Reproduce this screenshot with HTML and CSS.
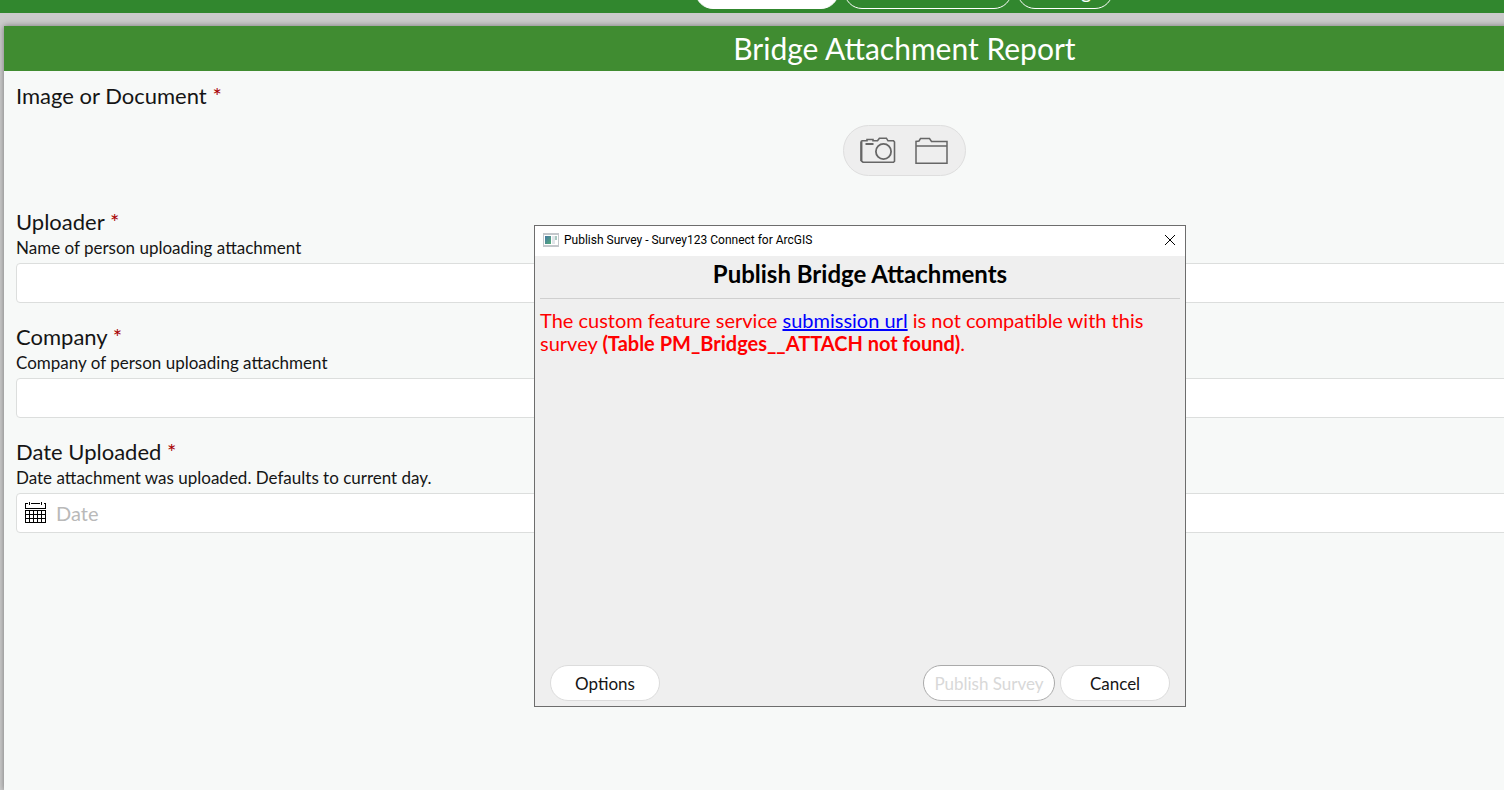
FILE: index.html
```html
<!DOCTYPE html>
<html lang="en">
<head>
<meta charset="utf-8">
<title>Survey123 Connect for ArcGIS</title>
<link rel="stylesheet" href="styles.css">
</head>
<body>
<div class="workspace">
  <nav class="toolbar">
    <button class="tab tab-form tab-active" type="button" aria-label="Form"></button>
    <button class="tab tab-schema" type="button" aria-label="Schema"></button>
    <button class="tab tab-settings" type="button">Settings</button>
  </nav>
  <main class="survey">
    <h1 class="survey-title">Bridge Attachment Report</h1>
    <form class="survey-form">
      <section class="question question-image">
        <h2 class="label">Image or Document <span class="required">*</span></h2>
        <div class="capture">
          <button class="icon-button" type="button" aria-label="Take photo">
            <svg width="36" height="28" viewBox="0 0 36 28" fill="none" stroke="#666">
              <path d="M1.500 3.500v20.500l1.500 1.200h30.500l1-1V5l-1-1.200h-5.500l-1.600-2.600h-7l-1.900 2.600h-4.500V2.500h-6v1.300H1.500" stroke-width="1.600"/>
              <path d="M1.200 4.500v19.500" stroke-width="2"/>
              <path d="M5.500 7h8" stroke-width="2"/>
              <circle cx="23.500" cy="14.500" r="7.600" stroke-width="1.800"/>
            </svg>
          </button>
          <button class="icon-button" type="button" aria-label="Choose file">
            <svg width="34" height="28" viewBox="0 0 34 28" fill="none" stroke="#666" stroke-width="1.500">
              <path d="M1 26.200V4.500L4 4l1.500-2.500h9L16.500 4.500H32v21.700z M1 9h31"/>
            </svg>
          </button>
        </div>
      </section>
      <section class="question">
        <label class="label" for="uploader">Uploader <span class="required">*</span></label>
        <p class="hint">Name of person uploading attachment</p>
        <input class="field" id="uploader" type="text">
      </section>
      <section class="question">
        <label class="label" for="company">Company <span class="required">*</span></label>
        <p class="hint">Company of person uploading attachment</p>
        <input class="field" id="company" type="text">
      </section>
      <section class="question">
        <label class="label" for="date">Date Uploaded <span class="required">*</span></label>
        <p class="hint">Date attachment was uploaded. Defaults to current day.</p>
        <div class="field date-field">
          <svg width="22" height="22" viewBox="0 0 22 22" fill="none" stroke="#000" shape-rendering="crispEdges">
            <path d="M3 1.500H.5v5h20v-5H19M6 1.500h9M4.500 0v3M16.500 0v3M.5 8.500h20v12H.5zM.5 12.500h20M.5 16.500h20M4.500 8.500v12M8.500 8.500v12M12.500 8.500v12M16.500 8.500v12"/>
          </svg>
          <input class="date-input" id="date" type="text" placeholder="Date">
        </div>
      </section>
    </form>
  </main>
</div>
<div class="dialog" role="dialog" aria-labelledby="dialog-heading">
  <header class="dialog-bar">
    <svg width="16" height="14" viewBox="0 0 16 14">
      <defs>
        <linearGradient id="app-pane" x1="0" y1="0" x2="1" y2="1">
          <stop offset="0" stop-color="#4577a3"/>
          <stop offset="1" stop-color="#54ad79"/>
        </linearGradient>
      </defs>
      <path fill="#c3c7cb" d="M0 0h16v14H0z"/>
      <path fill="#fff" d="M1 2h14v10H1z"/>
      <path fill="url(#app-pane)" d="M2 3h6v8H2z"/>
      <path fill="#e1e5e9" d="M9 3h3v8H9z"/>
      <path fill="#a8c9c1" d="M12 3h2v4h-2z"/>
    </svg>
    <span class="dialog-caption">Publish Survey - Survey123 Connect for ArcGIS</span>
    <button class="dialog-close" type="button" aria-label="Close">
      <svg width="12" height="12" viewBox="0 0 12 12" stroke="#000" stroke-width="1"><path d="M1 1l10 10M11 1L1 11"/></svg>
    </button>
  </header>
  <h2 class="dialog-heading" id="dialog-heading">Publish Bridge Attachments</h2>
  <p class="dialog-message">The custom feature service <a href="#">submission url</a> is not compatible with this survey <b>(Table PM_Bridges__ATTACH not found)</b>.</p>
  <footer class="dialog-actions">
    <button class="pill" type="button">Options</button>
    <button class="pill pill-publish" type="button" disabled>Publish Survey</button>
    <button class="pill" type="button">Cancel</button>
  </footer>
</div>
</body>
</html>
```
FILE: styles.css
```css
* {
  box-sizing: border-box;
}

body {
  margin: 0;
  min-height: 100vh;
  overflow: hidden;
  background: #cbcbcb;
  color: #151515;
  font-family: Lato, "Open Sans", sans-serif;
}

button,
input {
  font: inherit;
}

h1,
h2,
p {
  margin: 0;
  font-weight: 400;
}

.workspace {
  display: flex;
  flex-direction: column;
  width: 120%;
  min-height: 100vh;
}

.toolbar {
  display: flex;
  justify-content: center;
  align-items: flex-end;
  gap: 5px;
  height: 13px;
  padding: 0 0 4px 3px;
  overflow: hidden;
  background: #31872e;
}

.tab {
  flex: none;
  height: 36px;
  padding: 0;
  border: 1px solid #fff;
  border-radius: 18px;
  background: transparent;
  color: #fff;
  font-size: 20px;
  line-height: 24px;
}

.tab-active {
  background: #fff;
}

.tab-form {
  width: 144px;
}

.tab-schema {
  width: 168px;
}

.tab-settings {
  width: 96px;
}

.survey {
  flex: 1;
  margin: 13px 0 0 4px;
  background: #f7f9f8;
  box-shadow: 0 0 6px #777;
}

.survey-title {
  height: 45px;
  background: #408c31;
  color: #fff;
  font-size: 30px;
  line-height: 45px;
  text-align: center;
}

.survey-form {
  display: flex;
  flex-direction: column;
  gap: 20px;
  padding: 11px 12px;
}

.question {
  display: flex;
  flex-direction: column;
}

.question-image {
  gap: 15px;
  padding-bottom: 12px;
}

.label {
  font-size: 22px;
  line-height: 28px;
}

.required {
  color: #a80000;
}

.hint {
  font-size: 17px;
  line-height: 24px;
}

.field {
  width: 100%;
  height: 40px;
  margin-top: 3px;
  padding: 0 8px;
  border: 1px solid #dcdedd;
  border-radius: 4px;
  background: #fff;
}

.capture {
  display: flex;
  align-items: center;
  align-self: center;
  gap: 19px;
  height: 51px;
  padding: 0 16px;
  border: 1px solid #dedede;
  border-radius: 26px;
  background: #eee;
}

.icon-button {
  display: flex;
  padding: 0;
  border: 0;
  background: transparent;
}

.date-field {
  display: flex;
  align-items: center;
  gap: 9px;
}

.date-input {
  flex: 1;
  padding: 0;
  border: 0;
  background: transparent;
  font-size: 20px;
}

.date-input::placeholder {
  color: #b9b9b9;
}

.dialog {
  position: absolute;
  top: 225px;
  left: 534px;
  display: flex;
  flex-direction: column;
  width: 652px;
  height: 482px;
  border: 1px solid #6d6d6d;
  background: #efefef;
  color: #000;
}

.dialog-bar {
  display: flex;
  align-items: center;
  gap: 5px;
  height: 30px;
  padding: 0 9px 2px 8px;
  background: #fff;
}

.dialog-caption {
  flex: 1;
  font-family: Roboto, sans-serif;
  font-size: 12px;
}

.dialog-close {
  display: flex;
  padding: 0;
  border: 0;
  background: transparent;
}

.dialog-heading {
  margin: 0 5px;
  padding: 4px 0 10px;
  border-bottom: 1px solid #cfcfcf;
  font-size: 24px;
  font-weight: 700;
  line-height: 28px;
  text-align: center;
}

.dialog-message {
  flex: 1;
  padding: 10px 5px;
  color: #f00;
  font-size: 20px;
  line-height: 23px;
}

.dialog-message a {
  color: #00f;
}

.dialog-actions {
  display: flex;
  gap: 5px;
  padding: 0 15px 5px;
}

.pill {
  width: 110px;
  height: 36px;
  padding: 0;
  border: 1px solid #dcdcdc;
  border-radius: 18px;
  background: #fff;
  color: #151515;
  font-size: 17px;
}

.pill-publish {
  width: 132px;
  margin-left: auto;
  border-color: #aaa;
  color: #d8d8d8;
}
```
